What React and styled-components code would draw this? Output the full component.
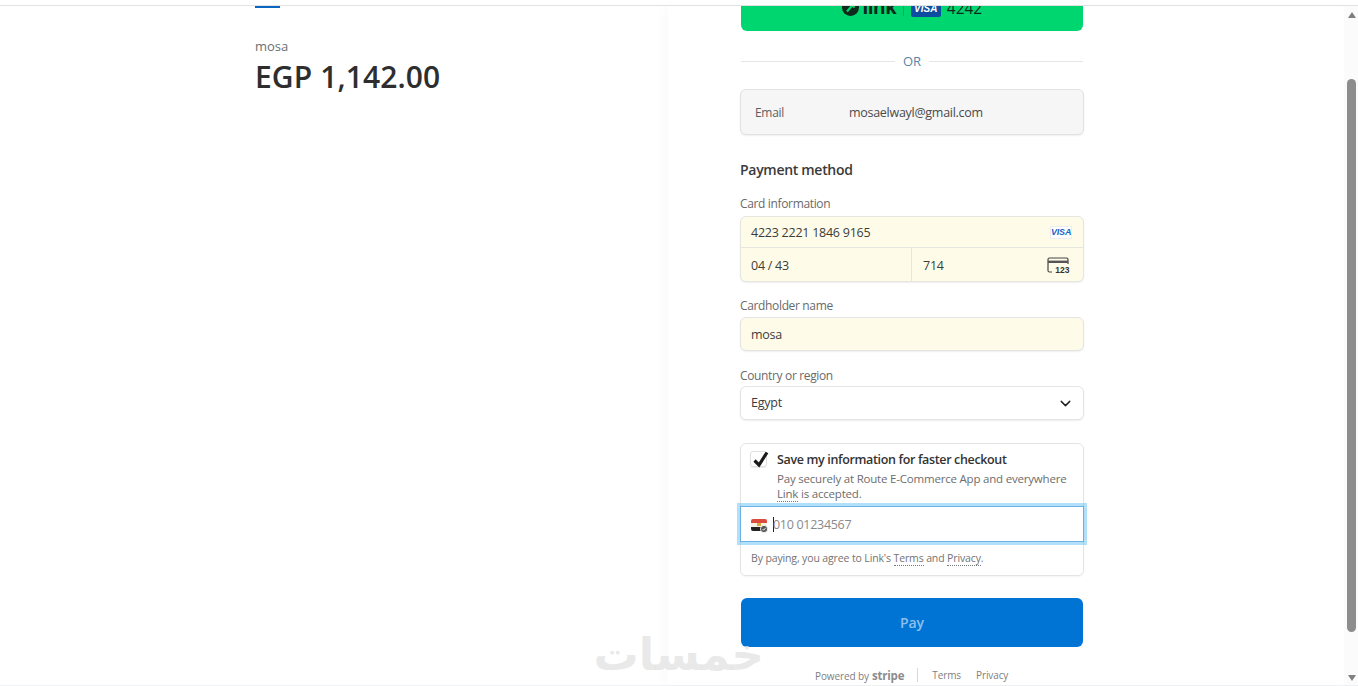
import React from 'react'
import styled, { createGlobalStyle } from 'styled-components'
import { ChevronDown } from 'lucide-react'

const GlobalStyle = createGlobalStyle`
  html, body {
    margin: 0;
    height: 100%;
    overflow: hidden;
    background: #fff;
  }
  body {
    font-family: "Open Sans", "Liberation Sans", sans-serif;
    color: #333;
  }
`

function App() {
  return (
    <Page>
      <GlobalStyle />
      <TopEdge />
      <Body>
        <Summary>
          <AccentBar />
          <Merchant>mosa</Merchant>
          <Amount>EGP 1,142.00</Amount>
        </Summary>

        <CheckoutPane>
          <Column>
            <ExpressButton>
              <LinkMark>
                <svg width="17" height="17" viewBox="0 0 17 17">
                  <circle cx="8.5" cy="8.5" r="8.5" fill="#0f2a1d" />
                  <path d="M5 12.5 L11.5 5 M8 5 H11.8 V8.8" stroke="#00d66f" strokeWidth="2.2" fill="none" />
                </svg>
                <LinkWord>link</LinkWord>
              </LinkMark>
              <ExpressDivider />
              <VisaBadge>VISA</VisaBadge>
              <Last4>4242</Last4>
            </ExpressButton>

            <OrRow>
              <OrLine />
              <OrText>OR</OrText>
              <OrLine />
            </OrRow>

            <EmailBox>
              <EmailLabel>Email</EmailLabel>
              <EmailValue>mosaelwayl@gmail.com</EmailValue>
            </EmailBox>

            <Heading>Payment method</Heading>

            <FieldLabel>Card information</FieldLabel>
            <CardBox>
              <CardRow>
                <FieldText>4223 2221 1846 9165</FieldText>
                <VisaChip>VISA</VisaChip>
              </CardRow>
              <CardSplit>
                <CardCell>
                  <FieldText>04 / 43</FieldText>
                </CardCell>
                <CardCell $divided>
                  <FieldText>714</FieldText>
                  <svg width="23" height="17" viewBox="0 0 23 17">
                    <path d="M5 15 H2.5 Q1 15 1 13.5 V2.5 Q1 1 2.5 1 H19.5 Q21 1 21 2.5 V7" stroke="#444" strokeWidth="1.2" fill="none" />
                    <rect x="1" y="3.6" width="20" height="2.4" fill="#555" />
                    <text x="22.5" y="15.5" textAnchor="end" fontSize="8.5" fontWeight="700" fontFamily="Liberation Sans" fill="#333">123</text>
                  </svg>
                </CardCell>
              </CardSplit>
            </CardBox>

            <FieldLabel>Cardholder name</FieldLabel>
            <InputBox $filled>
              <FieldText>mosa</FieldText>
            </InputBox>

            <FieldLabel $top={17}>Country or region</FieldLabel>
            <InputBox $top={2}>
              <InputText>Egypt</InputText>
              <ChevronDown size={17} color="#222" strokeWidth={2} />
            </InputBox>

            <SaveBox>
              <SaveRow>
                <Checkbox>
                  <svg width="20" height="20" viewBox="0 0 20 20">
                    <path d="M3.5 9.5 L8 14 L16 1.5" stroke="#1a1a1a" strokeWidth="3.2" fill="none" />
                  </svg>
                </Checkbox>
                <SaveText>
                  <SaveTitle>Save my information for faster checkout</SaveTitle>
                  <SaveNote>
                    Pay securely at Route E-Commerce App and everywhere <Dotted>Link</Dotted> is accepted.
                  </SaveNote>
                </SaveText>
              </SaveRow>
              <PhoneInput>
                <svg width="17" height="15" viewBox="0 0 17 15">
                  <path d="M0 3 Q0 1 2 1 H14 Q16 1 16 3 V5 H0 Z" fill="#dc4b3e" />
                  <rect x="0" y="5" width="16" height="4" fill="#f7f0e4" />
                  <rect x="6" y="5" width="4" height="3" fill="#d8a93c" />
                  <path d="M0 9 H16 V11 Q16 13 14 13 H2 Q0 13 0 11 Z" fill="#222" />
                  <circle cx="13" cy="11" r="3.6" fill="#555" stroke="#fff" strokeWidth="0.8" />
                  <path d="M11.5 11 L12.7 12.2 L14.6 9.9" stroke="#fff" strokeWidth="0.9" fill="none" />
                </svg>
                <Caret />
                <Placeholder>010 01234567</Placeholder>
              </PhoneInput>
              <Legal>
                By paying, you agree to Link's <Dotted>Terms</Dotted> and <Dotted>Privacy</Dotted>.
              </Legal>
            </SaveBox>

            <PayButton>Pay</PayButton>

            <Footer>
              <Powered>
                Powered by <StripeWord>stripe</StripeWord>
              </Powered>
              <FooterDivider />
              <FooterLink>Terms</FooterLink>
              <FooterLink>Privacy</FooterLink>
            </Footer>
          </Column>
          <Watermark lang="ar" dir="rtl">خمسات</Watermark>
        </CheckoutPane>

        <Scrollbar>
          <ArrowUp />
          <Thumb />
          <ArrowDown />
        </Scrollbar>
      </Body>
      <BottomEdge />
    </Page>
  )
}

export default App

const Page = styled.div`
  width: 1358px;
  height: 686px;
  display: flex;
  flex-direction: column;
  overflow: hidden;
`

const TopEdge = styled.div`
  height: 5px;
  flex: none;
  border-bottom: 1px solid #e3e3e3;
`

const BottomEdge = styled.div`
  height: 1px;
  flex: none;
  background: #eef2f2;
`

const Body = styled.div`
  flex: 1;
  min-height: 0;
  display: flex;
`

const Summary = styled.div`
  width: 413px;
  flex: none;
  padding-left: 255px;
`

const AccentBar = styled.div`
  width: 25px;
  height: 2px;
  background: #0a66c2;
`

const Merchant = styled.div`
  margin-top: 30px;
  font-size: 13px;
  line-height: 16px;
  font-weight: 500;
  color: #6b6f72;
`

const Amount = styled.div`
  margin-top: 3px;
  font-size: 30px;
  line-height: 40px;
  font-weight: 600;
  color: #2e2e2e;
  letter-spacing: 0.1px;
`

const CheckoutPane = styled.div`
  position: relative;
  flex: 1;
  min-width: 0;
  padding-left: 72px;
  box-shadow: -6px 0 10px rgba(0, 0, 0, 0.02);
`

const Column = styled.div`
  width: 344px;
  display: flex;
  flex-direction: column;
`

const ExpressButton = styled.div`
  height: 25px;
  margin: 0 1px;
  padding-bottom: 15px;
  box-sizing: border-box;
  background: #00d66f;
  border-radius: 0 0 6px 6px;
  overflow: hidden;
  display: flex;
  align-items: flex-end;
  justify-content: center;
  flex: none;
`

const LinkMark = styled.div`
  display: flex;
  align-items: center;
  gap: 4px;
  flex: none;
  height: 17px;
`

const LinkWord = styled.span`
  font-family: "Inter", sans-serif;
  font-size: 19.5px;
  line-height: 17px;
  font-weight: 700;
  color: #0f2a1d;
`

const ExpressDivider = styled.div`
  width: 1px;
  height: 20px;
  margin: 0 7px 0 6px;
  background: #10a85f;
  flex: none;
`

const VisaBadge = styled.div`
  width: 30px;
  height: 20px;
  margin-bottom: -1px;
  border-radius: 2px;
  background: #0d4da1;
  color: #fff;
  font-family: "Liberation Sans", sans-serif;
  font-size: 10px;
  font-weight: 700;
  font-style: italic;
  text-align: center;
  line-height: 24px;
  overflow: hidden;
  flex: none;
`

const Last4 = styled.div`
  margin-left: 6px;
  font-size: 15.5px;
  line-height: 20px;
  margin-bottom: -2px;
  color: #0f2a1d;
  flex: none;
`

const OrRow = styled.div`
  margin: 22px 1px 0;
  height: 16px;
  display: flex;
  align-items: center;
  gap: 8px;
`

const OrLine = styled.div`
  flex: 1;
  height: 1px;
  background: #e6e6e6;
`

const OrText = styled.span`
  font-size: 13px;
  color: #5b84a8;
`

const EmailBox = styled.div`
  margin-top: 20px;
  height: 46px;
  box-sizing: border-box;
  display: flex;
  align-items: center;
  padding-left: 14px;
  background: #f6f6f6;
  border: 1px solid #e2e2e2;
  border-radius: 6px;
  box-shadow: 0 1px 2px rgba(0, 0, 0, 0.07);
`

const EmailLabel = styled.span`
  width: 94px;
  font-size: 12px;
  font-weight: 500;
  letter-spacing: -0.3px;
  color: #5e5e5e;
`

const EmailValue = styled.span`
  font-size: 12.5px;
  letter-spacing: -0.28px;
  color: #4a4a4a;
`

const Heading = styled.div`
  margin-top: 25px;
  font-size: 14px;
  line-height: 20px;
  font-weight: 600;
  letter-spacing: -0.3px;
  color: #3a3a3a;
`

const FieldLabel = styled.div`
  margin: ${p => p.$top ?? 16}px 0 0 0;
  font-size: 12px;
  line-height: 16px;
  font-weight: 500;
  letter-spacing: -0.35px;
  color: #6a6a6a;
`

const CardBox = styled.div`
  margin-top: 4px;
  height: 66px;
  box-sizing: border-box;
  background: #fefce8;
  border: 1px solid #e6e6e0;
  border-radius: 6px;
  box-shadow: 0 1px 2px rgba(0, 0, 0, 0.07);
  display: flex;
  flex-direction: column;
`

const CardRow = styled.div`
  height: 31px;
  flex: none;
  box-sizing: border-box;
  padding: 0 11px 0 10px;
  display: flex;
  align-items: center;
  justify-content: space-between;
  border-bottom: 1px solid #e6e6e0;
`

const CardSplit = styled.div`
  flex: 1;
  display: grid;
  grid-template-columns: 170px 1fr;
`

const CardCell = styled.div`
  padding: 1px 13px 0 ${p => (p.$divided ? '11px' : '10px')};
  display: flex;
  align-items: center;
  justify-content: space-between;
  border-left: ${p => (p.$divided ? '1px solid #e6e6e0' : 'none')};
`

const FieldText = styled.span`
  font-size: 12.5px;
  letter-spacing: -0.25px;
  color: #3c3c3c;
`

const InputText = styled(FieldText)`
  margin-bottom: 1px;
`

const VisaChip = styled.span`
  width: 22px;
  height: 13px;
  background: #fff;
  border: 1px solid #eeeeee;
  box-sizing: border-box;
  color: #1a66c4;
  font-family: "Liberation Sans", sans-serif;
  font-size: 9px;
  font-weight: 700;
  font-style: italic;
  letter-spacing: -0.2px;
  line-height: 11px;
  text-align: center;
`

const InputBox = styled.div`
  margin-top: ${p => p.$top ?? 3}px;
  height: 34px;
  box-sizing: border-box;
  padding: 0 9px 0 10px;
  background: ${p => (p.$filled ? '#fefce8' : '#fff')};
  border: 1px solid #e4e4e4;
  border-radius: 6px;
  box-shadow: 0 1px 2px rgba(0, 0, 0, 0.07);
  display: flex;
  align-items: center;
  justify-content: space-between;
`

const SaveBox = styled.div`
  margin-top: 23px;
  height: 133px;
  box-sizing: border-box;
  border: 1px solid #e4e4e4;
  border-radius: 6px;
  box-shadow: 0 1px 2px rgba(0, 0, 0, 0.05);
  display: flex;
  flex-direction: column;
`

const SaveRow = styled.div`
  height: 62px;
  flex: none;
  box-sizing: border-box;
  padding: 7px 10px 0 9px;
  display: flex;
  gap: 10px;
`

const Checkbox = styled.div`
  width: 17px;
  height: 16px;
  flex: none;
  border: 1px solid #e0e0e0;
  border-radius: 3px;
  box-sizing: border-box;
  box-shadow: 0 1px 1px rgba(0, 0, 0, 0.08);
  display: flex;
  align-items: flex-start;
  justify-content: flex-start;

  svg {
    margin: -1px 0 0 0;
    flex: none;
  }
`

const SaveText = styled.div`
  flex: 1;
  display: flex;
  flex-direction: column;
`

const SaveTitle = styled.div`
  font-size: 12.5px;
  line-height: 18px;
  font-weight: 600;
  letter-spacing: -0.35px;
  color: #333;
`

const SaveNote = styled.div`
  margin-top: 2px;
  font-size: 11.5px;
  line-height: 15px;
  letter-spacing: -0.2px;
  color: #6d6d6d;
`

const Dotted = styled.span`
  border-bottom: 1px dotted #777;
`

const PhoneInput = styled.div`
  margin: 0 -1px;
  height: 36px;
  flex: none;
  box-sizing: border-box;
  padding: 0 10px;
  background: #fff;
  border: 1px solid #6cb2e4;
  box-shadow: 0 0 0 3px rgba(1, 150, 237, 0.3);
  display: flex;
  align-items: center;
  position: relative;

  svg {
    margin-top: 2px;
  }
`

const Caret = styled.span`
  width: 1px;
  height: 15px;
  margin-left: 5px;
  margin-right: -1px;
  background: #222;
  flex: none;
`

const Placeholder = styled.span`
  margin-top: 1px;
  font-size: 12.5px;
  letter-spacing: -0.3px;
  color: #8a8a8a;
`

const Legal = styled.div`
  margin-top: 9px;
  padding-left: 10px;
  font-size: 10.5px;
  line-height: 15px;
  letter-spacing: -0.13px;
  color: #737373;
`

const PayButton = styled.div`
  margin: 22px 1px 0;
  height: 49px;
  flex: none;
  background: #0074d4;
  border-radius: 6px;
  display: flex;
  align-items: center;
  justify-content: center;
  font-size: 14px;
  font-weight: 600;
  color: #8fc0ea;
`

const Footer = styled.div`
  margin-top: 20px;
  height: 16px;
  padding-left: 75px;
  display: flex;
  align-items: center;
  font-size: 10px;
  letter-spacing: -0.1px;
  color: #808080;
`

const Powered = styled.span`
  display: flex;
  align-items: baseline;
  gap: 3px;
`

const StripeWord = styled.span`
  font-size: 11.5px;
  font-weight: 700;
  letter-spacing: -0.2px;
  color: #8c8c8c;
`

const FooterDivider = styled.div`
  width: 1px;
  height: 14px;
  margin: 0 14px 0 13px;
  background: #d8d8d8;
`

const FooterLink = styled.span`
  margin-right: 15px;
`

const Watermark = styled.div`
  position: absolute;
  left: -68px;
  top: 623px;
  width: 164px;
  font-family: "DejaVu Sans", sans-serif;
  font-size: 45px;
  line-height: 52px;
  font-weight: 700;
  color: rgba(228, 228, 228, 0.8);
  text-align: center;
  white-space: nowrap;
  pointer-events: none;
`

const Scrollbar = styled.div`
  width: 14px;
  flex: none;
  box-sizing: border-box;
  padding: 6px 2px 4px 3px;
  background: #fbfbfb;
  display: flex;
  flex-direction: column;
  align-items: center;
`

const ArrowUp = styled.div`
  width: 0;
  height: 0;
  border-left: 4.5px solid transparent;
  border-right: 4.5px solid transparent;
  border-bottom: 6px solid #7f7f7f;
  flex: none;
`

const Thumb = styled.div`
  width: 9px;
  height: 553px;
  margin-top: 61px;
  border-radius: 5px;
  background: #8d8d8d;
  flex: none;
`

const ArrowDown = styled.div`
  width: 0;
  height: 0;
  margin-top: 43px;
  border-left: 4.5px solid transparent;
  border-right: 4.5px solid transparent;
  border-top: 6px solid #7f7f7f;
  flex: none;
`
